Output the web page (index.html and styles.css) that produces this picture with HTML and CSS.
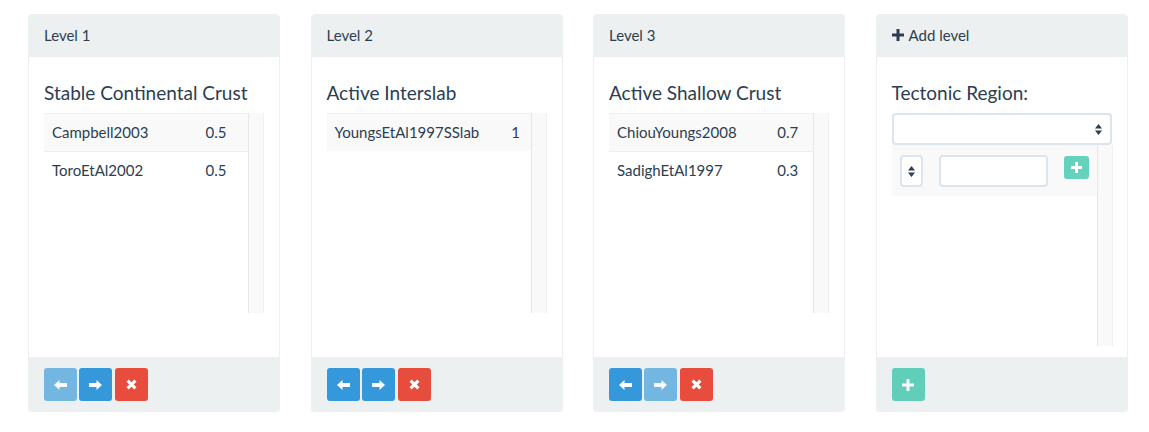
FILE: index.html
```html
<!DOCTYPE html>
<html>
<head>
<meta charset="utf-8">
<link rel="stylesheet" href="styles.css">
</head>
<body>
<div class="levels">
  <div class="panel">
    <div class="panel-heading">Level 1</div>
    <div class="panel-body">
      <h4 class="title">Stable Continental Crust</h4>
      <div class="scroll">
        <table class="gmpe">
          <tr class="odd"><td>Campbell2003</td><td>0.5</td></tr>
          <tr><td>ToroEtAl2002</td><td>0.5</td></tr>
        </table>
        <div class="track"></div>
      </div>
    </div>
    <div class="panel-footer">
      <button class="btn btn-blue disabled"><svg width="13" height="10" viewBox="0 0 13 10"><path d="M0 5L5.5 0V3H13V7H5.5V10Z" fill="#fff"/></svg></button>
      <button class="btn btn-blue"><svg width="13" height="10" viewBox="0 0 13 10"><path d="M13 5L7.5 0V3H0V7H7.5V10Z" fill="#fff"/></svg></button>
      <button class="btn btn-red"><svg width="11" height="11" viewBox="0 0 11 11"><path d="M1.6 1.6L9.4 9.4M9.4 1.6L1.6 9.4" stroke="#fff" stroke-width="3.2"/></svg></button>
    </div>
  </div>

  <div class="panel">
    <div class="panel-heading">Level 2</div>
    <div class="panel-body">
      <h4 class="title">Active Interslab</h4>
      <div class="scroll">
        <table class="gmpe">
          <tr class="odd"><td>YoungsEtAl1997SSlab</td><td>1</td></tr>
        </table>
        <div class="track"></div>
      </div>
    </div>
    <div class="panel-footer">
      <button class="btn btn-blue"><svg width="13" height="10" viewBox="0 0 13 10"><path d="M0 5L5.5 0V3H13V7H5.5V10Z" fill="#fff"/></svg></button>
      <button class="btn btn-blue"><svg width="13" height="10" viewBox="0 0 13 10"><path d="M13 5L7.5 0V3H0V7H7.5V10Z" fill="#fff"/></svg></button>
      <button class="btn btn-red"><svg width="11" height="11" viewBox="0 0 11 11"><path d="M1.6 1.6L9.4 9.4M9.4 1.6L1.6 9.4" stroke="#fff" stroke-width="3.2"/></svg></button>
    </div>
  </div>

  <div class="panel">
    <div class="panel-heading">Level 3</div>
    <div class="panel-body">
      <h4 class="title">Active Shallow Crust</h4>
      <div class="scroll">
        <table class="gmpe">
          <tr class="odd"><td>ChiouYoungs2008</td><td>0.7</td></tr>
          <tr><td>SadighEtAl1997</td><td>0.3</td></tr>
        </table>
        <div class="track"></div>
      </div>
    </div>
    <div class="panel-footer">
      <button class="btn btn-blue"><svg width="13" height="10" viewBox="0 0 13 10"><path d="M0 5L5.5 0V3H13V7H5.5V10Z" fill="#fff"/></svg></button>
      <button class="btn btn-blue disabled"><svg width="13" height="10" viewBox="0 0 13 10"><path d="M13 5L7.5 0V3H0V7H7.5V10Z" fill="#fff"/></svg></button>
      <button class="btn btn-red"><svg width="11" height="11" viewBox="0 0 11 11"><path d="M1.6 1.6L9.4 9.4M9.4 1.6L1.6 9.4" stroke="#fff" stroke-width="3.2"/></svg></button>
    </div>
  </div>

  <div class="panel">
    <div class="panel-heading add-heading"><svg class="plus-dark" width="12" height="12" viewBox="0 0 12 12"><path d="M4.5 0H7.5V4.5H12V7.5H7.5V12H4.5V7.5H0V4.5H4.5Z" fill="#2c3e50"/></svg>Add level</div>
    <div class="panel-body">
      <h4 class="title">Tectonic Region:</h4>
      <div class="select-box">
        <svg width="7" height="11" viewBox="0 0 7 11"><path d="M3.5 0L7 4.5H0Z M3.5 11L7 6.5H0Z" fill="#2c3e50"/></svg>
      </div>
      <div class="scroll scroll-tall">
        <div class="new-row-wrap">
          <div class="new-row">
            <div class="mini-select"><svg width="7" height="11" viewBox="0 0 7 11"><path d="M3.5 0L7 4.5H0Z M3.5 11L7 6.5H0Z" fill="#2c3e50"/></svg></div>
            <div class="text-input"></div>
            <button class="btn-xs btn-green disabled"><svg width="11" height="11" viewBox="0 0 11 11"><path d="M4 0H7V4H11V7H7V11H4V7H0V4H4Z" fill="#fff"/></svg></button>
          </div>
        </div>
        <div class="track"></div>
      </div>
    </div>
    <div class="panel-footer">
      <button class="btn btn-green disabled"><svg width="12" height="12" viewBox="0 0 12 12"><path d="M4.5 0H7.5V4.5H12V7.5H7.5V12H4.5V7.5H0V4.5H4.5Z" fill="#fff"/></svg></button>
    </div>
  </div>
</div>
</body>
</html>
```

FILE: styles.css
```css
* { box-sizing: border-box; }

html, body {
  margin: 0;
  padding: 0;
  background: #fff;
}

body {
  font-family: Lato, "Open Sans", "Liberation Sans", sans-serif;
  font-size: 15px;
  line-height: 1.428571;
  color: #2c3e50;
}

.levels {
  display: grid;
  grid-template-columns: repeat(4, 252px);
  column-gap: 30.5px;
  padding: 14px 0 0 28px;
}

.panel {
  border: 1px solid #ecf0f1;
  border-radius: 4px;
  background: #fff;
  box-shadow: 0 1px 1px rgba(0, 0, 0, 0.05);
  overflow: hidden;
}

.panel-heading {
  background: #ecf0f1;
  border-bottom: 1px solid #ecf0f1;
  padding: 10px 15px;
  height: 42px;
  font-size: 15px;
  line-height: 21px;
}

.add-heading {
  display: flex;
  align-items: center;
  gap: 5px;
}

.plus-dark { margin-top: -1px; }

.panel-body {
  height: 300px;
  padding: 15px 15px 0 15px;
  display: flex;
  flex-direction: column;
}

.title {
  margin: 10px 0 10px 0;
  font-size: 19px;
  font-weight: 400;
  line-height: 21px;
}

.scroll {
  display: flex;
  height: 200px;
}

.scroll-tall {
  height: 201px;
}

.gmpe {
  flex: 1;
  align-self: flex-start;
  border-collapse: collapse;
  border-spacing: 0;
}

.gmpe td {
  padding: 8px;
  border-top: 1px solid #ecf0f1;
  line-height: 21px;
  white-space: nowrap;
}

.gmpe tr.odd td {
  background: #f9f9f9;
}

.track {
  width: 16px;
  flex: none;
  background: #f9f9f9;
  border-left: 1px solid #e6e6e6;
  border-right: 1px solid #f0f0f0;
}

.panel-footer {
  background: #ecf0f1;
  border-top: 1px solid #ecf0f1;
  padding: 10px 15px;
  height: 54px;
  display: flex;
  gap: 2px;
}

.btn {
  width: 33px;
  height: 33px;
  border: 0;
  border-radius: 3px;
  padding: 0;
  display: flex;
  align-items: center;
  justify-content: center;
  cursor: pointer;
}

.btn-red { margin-left: 1px; }

.btn-blue { background: #3498db; }
.btn-red { background: #e74c3c; }
.btn-green { background: #18bc9c; }

.disabled { opacity: 0.65; }

.select-box {
  height: 32px;
  border: 2px solid #dce4ec;
  border-radius: 4px;
  display: flex;
  align-items: center;
  justify-content: flex-end;
  padding-right: 8px;
  flex: none;
}

.new-row-wrap {
  flex: 1;
  align-self: flex-start;
}

.new-row {
  background: #f9f9f9;
  height: 51px;
  border-top: 1px solid #f9f9f9;
  padding: 9px 8px;
  display: flex;
  align-items: flex-start;
}

.mini-select {
  width: 23px;
  height: 32px;
  border: 2px solid #dce4ec;
  border-radius: 4px;
  background: #fff;
  display: flex;
  align-items: center;
  justify-content: center;
}

.text-input {
  margin-left: 16px;
  width: 109px;
  height: 32px;
  border: 2px solid #dce4ec;
  border-radius: 4px;
  background: #fff;
}

.btn-xs {
  margin-left: 16px;
  margin-top: 1px;
  width: 25px;
  height: 23px;
  border: 0;
  border-radius: 3px;
  padding: 0;
  display: flex;
  align-items: center;
  justify-content: center;
}
```
